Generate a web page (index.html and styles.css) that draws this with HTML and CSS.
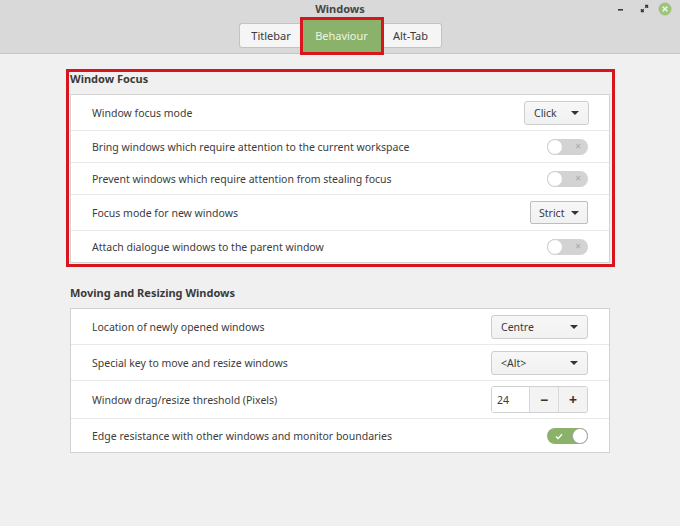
FILE: index.html
```html
<!DOCTYPE html>
<html lang="en">
<head>
<meta charset="utf-8">
<title>Windows</title>
<link rel="stylesheet" href="styles.css">
</head>
<body>
<header class="header">
  <div class="titlebar">
    <div></div>
    <div class="title">Windows</div>
    <div class="controls">
      <span class="ctl ctl-min"><svg width="8" height="8" viewBox="0 0 8 8"><rect x="1" y="4" width="5" height="1.6" fill="#3a3a3a"/></svg></span>
      <span class="ctl ctl-max"><svg width="9" height="9" viewBox="0 0 9 9"><path d="M5 1.5h2.5V4M4 7.5H1.5V5" fill="none" stroke="#3a3a3a" stroke-width="1.4"/><path d="M7.5 1.5L5.2 3.8M1.5 7.5L3.8 5.2" stroke="#3a3a3a" stroke-width="1.4"/></svg></span>
      <span class="ctl ctl-close"><svg width="14" height="14" viewBox="0 0 14 14"><circle cx="7" cy="7" r="6.5" fill="#9cc47a"/><path d="M4.6 4.6l4.8 4.8M9.4 4.6l-4.8 4.8" stroke="#e9f3df" stroke-width="1.5"/></svg></span>
    </div>
  </div>
  <nav class="tabs">
    <button class="tab tab-first">Titlebar</button>
    <button class="tab tab-active">Behaviour</button>
    <button class="tab tab-last">Alt-Tab</button>
  </nav>
</header>

<main class="main">
  <section class="section annotated">
    <h2 class="section-title">Window Focus</h2>
    <div class="card">
      <div class="row row-combo">
        <span class="label">Window focus mode</span>
        <span class="combo combo-click"><span>Click</span><i class="arrow"></i></span>
      </div>
      <div class="row row-switch">
        <span class="label">Bring windows which require attention to the current workspace</span>
        <span class="switch"><span class="x">×</span><span class="knob"></span></span>
      </div>
      <div class="row row-switch">
        <span class="label">Prevent windows which require attention from stealing focus</span>
        <span class="switch"><span class="x">×</span><span class="knob"></span></span>
      </div>
      <div class="row row-combo">
        <span class="label">Focus mode for new windows</span>
        <span class="combo combo-strict"><span>Strict</span><i class="arrow"></i></span>
      </div>
      <div class="row row-switch">
        <span class="label">Attach dialogue windows to the parent window</span>
        <span class="switch"><span class="x">×</span><span class="knob"></span></span>
      </div>
    </div>
  </section>

  <section class="section second">
    <h2 class="section-title">Moving and Resizing Windows</h2>
    <div class="card">
      <div class="row row-combo">
        <span class="label">Location of newly opened windows</span>
        <span class="combo combo-wide"><span>Centre</span><i class="arrow"></i></span>
      </div>
      <div class="row row-combo">
        <span class="label">Special key to move and resize windows</span>
        <span class="combo combo-wide"><span>&lt;Alt&gt;</span><i class="arrow"></i></span>
      </div>
      <div class="row row-spin">
        <span class="label">Window drag/resize threshold (Pixels)</span>
        <span class="spin"><span class="spin-entry">24</span><span class="spin-btn">−</span><span class="spin-btn">+</span></span>
      </div>
      <div class="row row-last">
        <span class="label">Edge resistance with other windows and monitor boundaries</span>
        <span class="switch on"><svg class="check" width="8" height="7" viewBox="0 0 8 7"><path d="M1 3.6l2 2L7 1.2" fill="none" stroke="#ffffff" stroke-width="1.4"/></svg><span class="knob"></span></span>
      </div>
    </div>
  </section>
</main>
</body>
</html>
```
FILE: styles.css
```css
* { box-sizing: border-box; }
html, body { margin: 0; padding: 0; }
body {
  width: 680px;
  height: 526px;
  background: #f0f0f0;
  font-family: "Noto Sans", "DejaVu Sans", sans-serif;
  font-size: 10.5px;
  color: #3c3c3c;
  overflow: hidden;
}

.header {
  height: 54px;
  background: #d9d9d9;
  border-bottom: 1px solid #c6c6c6;
}
.titlebar {
  display: grid;
  grid-template-columns: 1fr auto 1fr;
  align-items: center;
  height: 16px;
}
.title {
  font-weight: bold;
  font-size: 11px;
  color: #454545;
  padding-top: 1px;
}
.controls {
  display: flex;
  justify-content: flex-end;
  align-items: center;
  padding-top: 1px;
  padding-right: 5px;
}
.ctl { display: flex; align-items: center; justify-content: center; }
.ctl-min { width: 24px; }
.ctl-max { width: 22px; }
.ctl-close { width: 20px; }

.tabs {
  display: flex;
  justify-content: center;
  align-items: center;
  height: 37px;
  padding-top: 2px;
}
.tab {
  font-family: inherit;
  font-size: 11px;
  color: #3a3a3a;
  background: #f5f5f5;
  border: 1px solid #c3c3c3;
  height: 25px;
  padding: 0;
  margin: 0;
}
.tab-first { width: 64px; border-radius: 3px 0 0 3px; border-right: none; }
.tab-last { width: 61px; border-radius: 0 3px 3px 0; border-left: none; }
.tab-active {
  width: 78px;
  height: 32px;
  background: #8bb26a;
  border-color: #8bb26a;
  color: #eef4e6;
  outline: 3px solid #d8141c;
  position: relative;
  z-index: 1;
}

.main {
  padding: 15px 0 0 70px;
}
.section { width: 540px; }
.section-title {
  margin: 0 0 8px 0;
  font-size: 11px;
  font-weight: bold;
  line-height: 14px;
  color: #3a3a3a;
}
.annotated {
  width: 549px;
  margin-left: -4px;
  border: 3px solid #d8141c;
  padding: 0 2px 1px 1px;
}
.second { margin-top: 19px; }

.card {
  background: #ffffff;
  border: 1px solid #d2d2d2;
}
.row {
  display: flex;
  align-items: center;
  justify-content: space-between;
  padding: 0 21px 0 21px;
  border-top: 1px solid #e9e9e9;
}
.row:first-child { border-top: none; }
.row-combo { height: 36px; }
.row:first-child.row-combo { height: 35px; }
.row-switch { height: 32px; }
.row-spin { height: 38px; }
.row-last { height: 34px; }
.label { color: #3c3c3c; }

.combo {
  display: flex;
  align-items: center;
  justify-content: space-between;
  height: 24px;
  background: linear-gradient(#f7f7f7, #f1f1f1);
  border: 1px solid #cdcdcd;
  border-radius: 3px;
  padding: 0 9px 0 9px;
  color: #3a3a3a;
}
.combo-click { width: 65px; margin-right: -1px; }
.combo-strict {
  width: 58px;
  height: 23px;
  border-color: #bdbdbd;
  border-radius: 2px;
  padding: 0 8px 0 8px;
}
.combo-wide { width: 97px; }
.arrow {
  width: 0; height: 0;
  border-left: 4px solid transparent;
  border-right: 4px solid transparent;
  border-top: 4px solid #333333;
}

.switch {
  position: relative;
  width: 41px;
  height: 16px;
  border-radius: 8px;
  background: #d3d3d3;
}
.switch .knob {
  position: absolute;
  left: 0; top: 0;
  width: 16px; height: 16px;
  border-radius: 50%;
  background: #ffffff;
  border: 1px solid #d0d0d0;
}
.switch .x {
  position: absolute;
  right: 7px; top: 0;
  line-height: 15px;
  font-size: 10px;
  color: #a8a8a8;
}
.switch.on { background: #8bb26a; }
.switch.on .knob { left: auto; right: 0; border-color: #a9a9a9; }
.switch .check { position: absolute; left: 8px; top: 5px; }

.spin {
  display: flex;
  height: 27px;
  width: 97px;
  border: 1px solid #d0d0d0;
  border-radius: 3px;
  overflow: hidden;
}
.spin-entry {
  width: 38px;
  background: #ffffff;
  display: flex;
  align-items: center;
  padding-left: 5px;
  border-right: 1px solid #d8d8d8;
}
.spin-btn {
  flex: 1;
  display: flex;
  align-items: center;
  justify-content: center;
  background: #f3f3f3;
  font-size: 14px;
  font-weight: bold;
  color: #333333;
}
.spin-btn + .spin-btn { border-left: 1px solid #d8d8d8; }
```
